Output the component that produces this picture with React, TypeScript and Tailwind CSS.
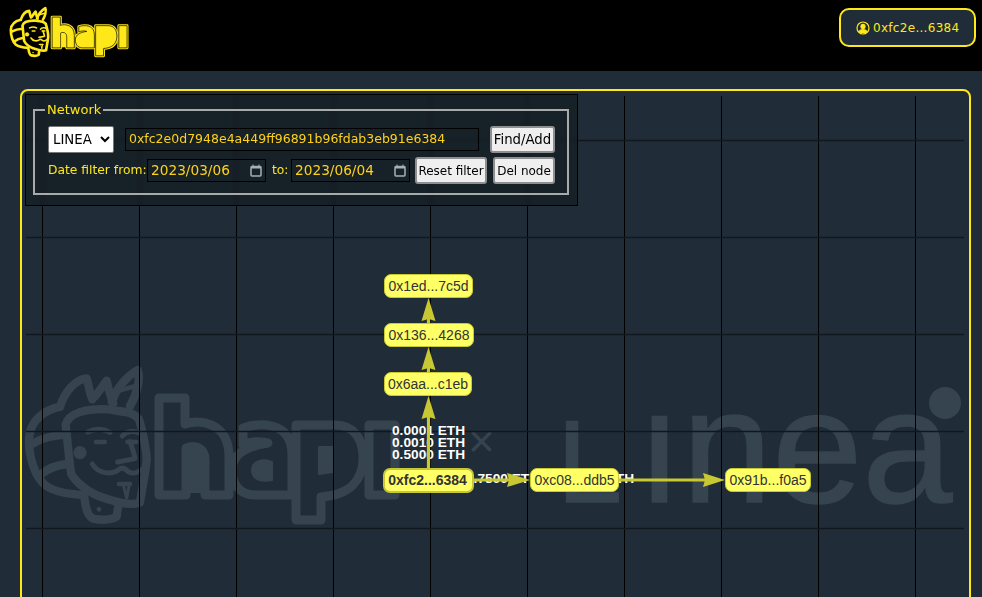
import React from "react";

const dejavu = "font-['DejaVu_Sans',sans-serif]";

function LetterPaths({ fill, gap }: { fill?: string; gap?: string }) {
  const outlines = [
    "M159,398 L185,398 L185,424 C200,419 229,422 229,457 L229,495 L205,495 L205,460 C205,448 195,444 186,448 L186,495 L159,495 Z",
    "M243,428 C255,424 292,418 292,455 L292,495 L255,495 C238,495 232,482 232,470 C232,452 250,446 268,443 C262,441 250,441 243,445 Z",
    "M296,425 L335,425 C355,425 363,440 363,458 C363,480 350,495 321,497 L321,520 L296,520 Z",
    "M369,425 L395,425 L395,495 L369,495 Z",
  ];
  return (
    <g strokeLinejoin="round">
      {outlines.map((d) => (
        <path key={d} d={d} fill="none" stroke="currentColor" strokeWidth="9" />
      ))}
      {fill &&
        outlines.map((d) => (
          <path key={d + "i"} d={d} fill={fill} stroke={gap} strokeWidth="2.2" />
        ))}
      <path d="M188,450 C194,446 203,450 203,460 L203,493 L188,493 Z" fill="currentColor" />
      <path d="M252,470 C252,462 262,458 272,462 L272,480 C262,482 252,480 252,470 Z" fill="currentColor" stroke="currentColor" strokeWidth="2" />
      <path d="M319,447 L333,447 L333,472 L319,474 Z" fill="currentColor" stroke="currentColor" strokeWidth="2" />
    </g>
  );
}

function Mask() {
  return (
    <g transform="translate(15 360) scale(0.3333)" fill="none" stroke="currentColor" strokeWidth="25" strokeLinecap="round" strokeLinejoin="round">
      <path d="M135,140 C90,150 45,180 42,235 C40,290 60,350 90,375 C120,398 165,402 205,405" />
      <path d="M55,250 C85,232 120,226 152,224" />
      <path d="M75,345 C95,328 125,315 155,312" />
      <path d="M135,140 C150,95 180,58 215,55 C222,75 222,95 232,118" />
      <path d="M240,110 L275,62 C280,85 285,105 295,130" />
      <path d="M290,125 C305,85 335,50 368,30 C378,55 365,105 345,138" />
      <path d="M310,92 L362,78" strokeWidth="14" />
      <path d="M152,195 C160,158 215,145 280,148 C320,158 350,150 372,178 C385,220 395,275 395,300 C390,350 380,390 375,428 C340,440 290,422 250,408 C210,392 178,360 168,340 C160,280 157,235 152,195 Z" />
      <circle cx="195" cy="278" r="18" fill="currentColor" strokeWidth="4" />
      <path d="M218,216 C240,206 265,206 285,217" strokeWidth="15" />
      <path d="M322,228 C335,212 362,210 378,222" strokeWidth="15" />
      <path d="M243,246 L270,246" strokeWidth="13" />
      <path d="M337,246 L364,246" strokeWidth="13" />
      <path d="M345,245 C352,265 358,280 360,296 L308,306" strokeWidth="15" />
      <path d="M232,312 C250,342 290,345 310,330 C320,320 330,325 340,335 C350,342 365,340 378,330" strokeWidth="15" />
      <path d="M312,372 L345,372" strokeWidth="14" />
      <path d="M326,378 L335,415 L342,378" strokeWidth="9" />
      <path d="M208,412 C212,445 218,470 235,476 C260,482 290,480 305,470 L310,435" />
      <circle cx="252" cy="448" r="7" fill="currentColor" stroke="none" />
    </g>
  );
}

function HapiLogo({ fill, gap, className }: { fill?: string; gap?: string; className: string }) {
  return (
    <svg viewBox="20 360 400 170" className={className}>
      <Mask />
      <LetterPaths fill={fill} gap={gap} />
    </svg>
  );
}

function CalendarIcon() {
  return (
    <svg viewBox="0 0 12 13" className="h-[13px] w-[12px] shrink-0">
      <rect x="1" y="2.5" width="10" height="9.5" rx="1" fill="none" stroke="#a9b0b5" strokeWidth="1.5" />
      <rect x="1" y="2" width="10" height="2.5" fill="#a9b0b5" />
      <path d="M3 0.5V2.5M9 0.5V2.5" stroke="#a9b0b5" strokeWidth="1" />
    </svg>
  );
}

function DateField({ value }: { value: string }) {
  return (
    <div className={`flex h-[23px] w-[119px] shrink-0 items-center justify-between border border-black pl-[3px] pr-[3px] text-[13.7px] leading-none text-[#ffd21a] ${dejavu}`}>
      <span>{value}</span>
      <CalendarIcon />
    </div>
  );
}

function PanelButton({ label, className }: { label: string; className: string }) {
  return (
    <button className={`h-[27px] shrink-0 rounded-[3px] border-2 border-[#8f8f8f] bg-[#efefef] p-0 text-black ${dejavu} ${className}`}>
      {label}
    </button>
  );
}

const verticals = [42, 139, 236, 333, 430, 527, 624, 721, 818, 915];
const horizontals = [140, 237, 334, 431, 528];

const edges = [
  { line: "M428.5,468V415", head: "M428.5,396 L435.5,419 L428.5,417 L421.5,419 Z" },
  { line: "M428.5,372V366", head: "M428.5,347 L435.5,370 L428.5,368 L421.5,370 Z" },
  { line: "M428.5,323V317", head: "M428.5,298 L435.5,321 L428.5,319 L421.5,321 Z" },
  { line: "M473,480H510", head: "M530,480 L507,473 L509,480 L507,487 Z" },
  { line: "M619,480H706", head: "M725,480 L703,473 L705,480 L703,487 Z" },
];

const nodes = [
  { text: "0x1ed...7c5d", cls: "left-[362px] top-[183px] w-[89px] h-[24px]" },
  { text: "0x136...4268", cls: "left-[362px] top-[232px] w-[90px] h-[24px]" },
  { text: "0x6aa...c1eb", cls: "left-[362px] top-[281px] w-[88px] h-[24px]" },
  { text: "0xc08...ddb5", cls: "left-[508px] top-[377px] w-[89px] h-[24px]" },
  { text: "0x91b...f0a5", cls: "left-[703px] top-[377px] w-[86px] h-[24px]" },
];

const arial = "font-['Liberation_Sans',Arial,sans-serif]";
const wash = "text-[#36444f]";

export default function App() {
  return (
    <div className="flex h-screen flex-col overflow-hidden bg-[#202d38]">
      <header className="relative flex h-[71px] shrink-0 items-start justify-between bg-black pl-[8px] pr-[6px] pt-[5px]">
        <HapiLogo fill="#ffe81a" gap="#000000" className="h-[54px] w-[127px] text-[#ffe81a]" />
        <div className={`mt-[3px] flex h-[39px] w-[137px] items-center gap-[3px] rounded-[10px] border-2 border-[#ffe81a] bg-[#202d38] pl-[15px] text-[12px] tracking-[0.3px] text-[#ffe81a] ${dejavu}`}>
          <svg viewBox="0 0 14 14" className="h-[14px] w-[14px] shrink-0">
            <circle cx="7" cy="7" r="6" fill="none" stroke="#ffe81a" strokeWidth="1.2" />
            <circle cx="7" cy="5.4" r="2.6" fill="#ffe81a" />
            <path d="M2.6,11 C3.2,8.6 5,8 7,8 C9,8 10.8,8.6 11.4,11 C10,12.8 4,12.8 2.6,11 Z" fill="#ffe81a" />
          </svg>
          <span>0xfc2e...6384</span>
        </div>
      </header>

      <main className="flex-1 pl-[20px] pr-[11px] pt-[18px]">
        <div className="relative h-[600px] overflow-hidden rounded-lg border-2 border-[#ffe81a]">
          {/* watermark */}
          <HapiLogo className={`absolute left-[-2px] top-[269px] h-[170px] w-[400px] ${wash}`} />
          <span className={`absolute left-[446px] top-[327px] text-[46px] font-light leading-[46px] ${wash} ${arial}`}>×</span>
          <div className={`absolute left-[535px] top-[280px] flex h-[150px] items-baseline font-normal leading-[150px] [-webkit-text-stroke:1.5px_#36444f] ${wash} ${arial}`}>
            <span className="text-[117px]">L</span>
            <span className="ml-[15px] text-[162px]">ınea</span>
          </div>
          <div className="absolute left-[907px] top-[296px] h-[32px] w-[32px] rounded-full bg-[#36444f]" />

          {/* grid */}
          <svg viewBox="22 91 948 506" className="absolute left-0 top-0 h-[506px] w-[948px]">
            {verticals.map((x) => (
              <line key={x} x1={x + 0.5} x2={x + 0.5} y1="96" y2="597" stroke="#000000" strokeWidth="1" />
            ))}
            {horizontals.map((y) => (
              <line key={y} x1="26" x2="964" y1={y + 0.5} y2={y + 0.5} stroke="#10181e" strokeWidth="1.5" />
            ))}
          </svg>

          {/* edge labels */}
          <div className={`absolute left-[370px] top-[334px] text-[13.7px] font-bold leading-[12px] text-white ${arial}`}>
            <div>0.0001 ETH</div>
            <div>0.0010 ETH</div>
            <div>0.5000 ETH</div>
          </div>
          <div className={`absolute left-[444px] top-[382px] text-[13.7px] font-bold leading-[12px] text-white ${arial}`}>0.7500 ETH</div>
          <div className={`absolute left-[539px] top-[382px] text-[13.7px] font-bold leading-[12px] text-white ${arial}`}>0.7500 ETH</div>

          {/* edges */}
          <svg viewBox="22 91 948 506" className="absolute left-0 top-0 h-[506px] w-[948px]">
            {edges.map((e) => (
              <g key={e.head}>
                <path d={e.line} stroke="#c8c832" strokeWidth="3.2" fill="none" />
                <path d={e.head} fill="#c8c832" />
              </g>
            ))}
          </svg>

          {/* nodes */}
          {nodes.map((n) => (
            <div
              key={n.text}
              className={`absolute flex items-center justify-center rounded-[7px] border border-[#c8c832] bg-[#ffff66] text-[14px] text-[#333333] ${arial} ${n.cls}`}
            >
              {n.text}
            </div>
          ))}
          <div className={`absolute left-[361px] top-[377px] flex h-[25px] w-[91px] items-center justify-center rounded-[7px] border-2 border-[#c8c832] bg-[#ffff66] pr-[2px] text-[14px] font-bold text-[#333333] ${arial}`}>
            0xfc2...6384
          </div>

          {/* control panel */}
          <div className="absolute left-[3px] top-[3px] h-[112px] w-[553px] border border-black bg-[#141c22]/70 pl-[7px] pt-[7px] backdrop-blur-[2px]">
            <fieldset className="w-[536px] border-2 border-[#aaaaaa] pb-[9px] pl-[13px]">
              <legend className={`ml-[-3px] px-[2px] text-[13px] leading-[16px] text-[#ffe81a] ${dejavu}`}>Network</legend>
              <div className="mt-[8px] flex items-center">
                <select defaultValue="LINEA" className={`h-[27px] w-[66px] shrink-0 rounded-[2px] border border-[#767676] bg-white text-[13.33px] text-black ${dejavu}`}>
                  <option>LINEA</option>
                </select>
                <div className={`ml-[11px] flex h-[23px] w-[354px] shrink-0 items-center border border-black pl-[3px] text-[12.5px] text-[#ffd21a] ${dejavu}`}>
                  0xfc2e0d7948e4a449ff96891b96fdab3eb91e6384
                </div>
                <PanelButton label="Find/Add" className="ml-[11px] w-[65px] text-[13.3px]" />
              </div>
              <div className="mt-[4px] flex items-center">
                <span className={`w-[99px] shrink-0 whitespace-nowrap text-[12.3px] text-[#ffe81a] ${dejavu}`}>Date filter from:</span>
                <DateField value="2023/03/06" />
                <span className={`ml-[6px] w-[19px] shrink-0 text-[12.3px] text-[#ffe81a] ${dejavu}`}>to:</span>
                <DateField value="2023/06/04" />
                <PanelButton label="Reset filter" className="ml-[5px] w-[72px] text-[12px]" />
                <PanelButton label="Del node" className="ml-[6px] w-[62px] text-[12px]" />
              </div>
            </fieldset>
          </div>
        </div>
      </main>
    </div>
  );
}
